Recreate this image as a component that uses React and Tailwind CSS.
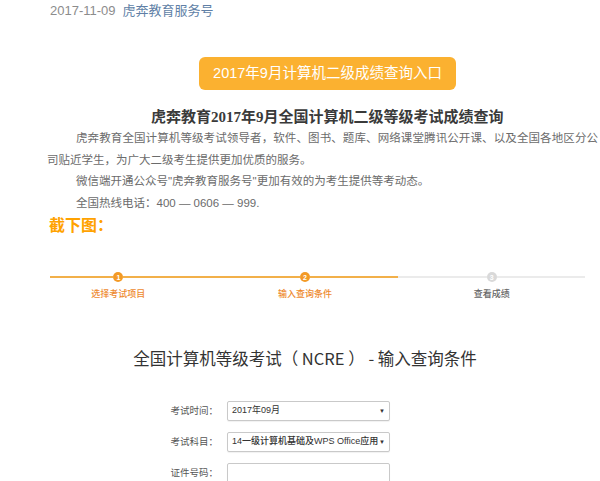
const sans = "font-['Liberation_Sans','Noto_Sans_CJK_SC',sans-serif]";

function Step({ n, label, active, line, offset }) {
  return (
    <div className="flex flex-col">
      <div className="flex items-center h-[14px]">
        <div className="flex-1 flex">
          <div className={`flex-1 h-[2px] ${offset ? 'ml-[25px]' : ''} ${line}`} />
        </div>
        <div
          className={`w-[10px] h-[10px] rounded-full flex items-center justify-center text-[7px] leading-none font-bold text-white ${
            active ? 'bg-[#f39a26]' : 'bg-[#d9d9d9]'
          }`}
        >
          {n}
        </div>
        <div className={`flex-1 h-[2px] ${line}`} />
      </div>
      <div
        className={`mt-[4px] h-[12px] leading-[12px] text-center text-[9px] font-medium ${
          active ? 'text-[#ee8a2f]' : 'text-[#666]'
        }`}
      >
        {label}
      </div>
    </div>
  );
}

function Field({ label, children }) {
  return (
    <div className="flex items-center h-[20px]">
      <div className="w-[227px] text-right text-[9.5px] text-[#555] pr-[9px]">{label}</div>
      <div className="w-[163px] h-[20px] border border-[#c9c9c9] rounded-[2px] bg-white shadow-[0_1px_1px_rgba(0,0,0,0.06)] flex items-center px-[4px] text-[9px] text-[#333]">
        {children}
      </div>
    </div>
  );
}

export default function App() {
  return (
    <div className={`w-[600px] h-[481px] overflow-hidden bg-white ${sans}`}>
      {/* header meta */}
      <div className="h-[22px] leading-[22px] pl-[50px] text-[13px] whitespace-nowrap">
        <span className="text-[#8c8c8c]">2017-11-09</span>
        <span className="ml-[7px] text-[#607fa6]">虎奔教育服务号</span>
      </div>

      {/* entry button */}
      <div className="mt-[35px] ml-[199px] w-[257px] h-[33px] rounded-[6px] bg-[#fbb130] text-white text-[14.5px] leading-[33px] text-center">
        2017年9月计算机二级成绩查询入口
      </div>

      {/* article */}
      <div className="mt-[16px] h-[22px] leading-[22px] pl-[151px] text-[15px] font-bold text-[#3a3a3a] whitespace-nowrap font-['Liberation_Serif','Noto_Sans_CJK_SC',serif]">
        虎奔教育2017年9月全国计算机二级等级考试成绩查询
      </div>
      <div className="pl-[47px] pr-[2px] text-[11.5px] leading-[21.5px] text-[#6b6b6b]">
        <p className="indent-[29px] text-justify [text-align-last:justify] whitespace-nowrap">
          虎奔教育全国计算机等级考试领导者，软件、图书、题库、网络课堂腾讯公开课、以及全国各地区分公
        </p>
        <p>司贴近学生，为广大二级考生提供更加优质的服务。</p>
        <p className="indent-[29px]">微信端开通公众号"虎奔教育服务号"更加有效的为考生提供等考动态。</p>
        <p className="indent-[29px]">全国热线电话：400 — 0606 — 999.</p>
      </div>
      <div className="pl-[49px] h-[24px] leading-[24px] text-[16px] font-bold text-[#ffa200]">截下图：</div>

      {/* screenshot of query page */}
      <div className="mt-[32px] ml-[25px] w-[560px]">
        <div className="grid grid-cols-3">
          <Step n="1" label="选择考试项目" active offset line="bg-[#f2b04a]" />
          <Step n="2" label="输入查询条件" active line="bg-[#f2b04a]" />
          <Step n="3" label="查看成绩" line="bg-[#ebebeb]" />
        </div>

        <div className="mt-[46px] h-[24px] leading-[24px] text-center text-[16.5px] text-[#333] font-['Noto_Sans_CJK_SC',sans-serif]">
          全国计算机等级考试（ NCRE ） - 输入查询条件
        </div>

        <div className="mt-[31px] flex flex-col gap-[11px] -ml-[25px]">
          <Field label="考试时间：">
            <span className="flex-1">2017年09月</span>
            <span className="text-[6px]">▼</span>
          </Field>
          <Field label="考试科目：">
            <span className="flex-1 font-medium whitespace-nowrap">14一级计算机基础及WPS Office应用</span>
            <span className="text-[6px]">▼</span>
          </Field>
          <Field label="证件号码：" />
        </div>
      </div>
    </div>
  );
}
